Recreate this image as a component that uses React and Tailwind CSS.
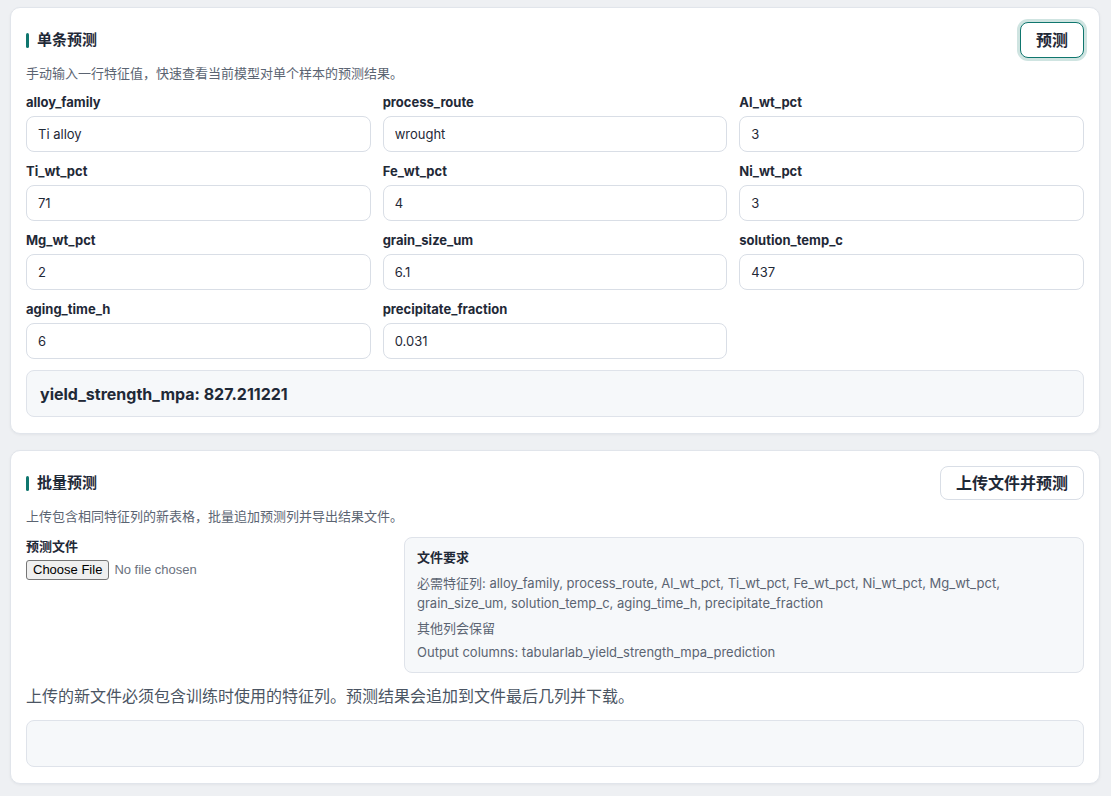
import React from 'react';

const FONT = "font-['Inter','Noto_Sans_CJK_SC',sans-serif]";

const FIELDS = [
  ['alloy_family', 'Ti alloy'],
  ['process_route', 'wrought'],
  ['Al_wt_pct', '3'],
  ['Ti_wt_pct', '71'],
  ['Fe_wt_pct', '4'],
  ['Ni_wt_pct', '3'],
  ['Mg_wt_pct', '2'],
  ['grain_size_um', '6.1'],
  ['solution_temp_c', '437'],
  ['aging_time_h', '6'],
  ['precipitate_fraction', '0.031'],
];

function SectionTitle({ children }) {
  return (
    <div className="flex items-center gap-2">
      <span className="inline-block w-[3px] h-[15px] rounded-sm bg-[#0f766e]" />
      <h2 className="text-[15px] font-bold text-[#1f2937] leading-5">{children}</h2>
    </div>
  );
}

function Field({ label, value }) {
  return (
    <label className="flex flex-col gap-[5px]">
      <span className="text-[13px] font-bold leading-[18px] text-[#1f2937]">{label}</span>
      <input
        defaultValue={value}
        className="h-9 w-full rounded-lg border border-[#d9dee6] bg-white px-[11px] text-[13px] text-[#1f2937] outline-none"
      />
    </label>
  );
}

export default function App() {
  return (
    <div className={`min-h-screen bg-[#eef0f3] pl-[10px] pr-[11px] pt-[7px] pb-4 ${FONT}`}>
      <div className="flex flex-col gap-4">
        {/* Single prediction */}
        <section className="rounded-[10px] border border-[#e1e5eb] bg-white px-[15px] pt-[14px] pb-4 shadow-[0_1px_3px_rgba(15,23,42,0.05)]">
          <div className="flex items-center justify-between">
            <SectionTitle>单条预测</SectionTitle>
            <button className="h-9 rounded-lg border border-[#0f766e] bg-white px-[15px] text-[16px] font-bold text-[#1f2937] ring-[3px] ring-[#cfe4e1]">
              预测
            </button>
          </div>
          <p className="mt-[5px] text-[13px] leading-5 text-[#5b6472]">
            手动输入一行特征值，快速查看当前模型对单个样本的预测结果。
          </p>
          <div className="mt-[10px] grid grid-cols-3 gap-x-3 gap-y-[10px]">
            {FIELDS.map(([label, value]) => (
              <Field key={label} label={label} value={value} />
            ))}
          </div>
          <div className="mt-[11px] flex h-[47px] items-center rounded-lg border border-[#dfe3ea] bg-[#f6f8fa] px-[13px]">
            <span className="text-[16px] font-bold text-[#1f2937]">yield_strength_mpa: 827.211221</span>
          </div>
        </section>

        {/* Batch prediction */}
        <section className="rounded-[10px] border border-[#e1e5eb] bg-white px-[15px] pt-[15px] pb-4 shadow-[0_1px_3px_rgba(15,23,42,0.05)]">
          <div className="flex items-center justify-between">
            <SectionTitle>批量预测</SectionTitle>
            <button className="h-[34px] rounded-lg border border-[#d9dee6] bg-white px-[15px] text-[16px] font-bold text-[#1f2937]">
              上传文件并预测
            </button>
          </div>
          <p className="mt-[6px] text-[13px] leading-5 text-[#5b6472]">
            上传包含相同特征列的新表格，批量追加预测列并导出结果文件。
          </p>
          <div className="mt-[11px] grid grid-cols-[366px_1fr] gap-3">
            <div className="flex flex-col items-start gap-[5px]">
              <span className="text-[13px] font-bold leading-[18px] text-[#1f2937]">预测文件</span>
              <input
                type="file"
                className="font-['Liberation_Sans',sans-serif] text-[13px] leading-5 text-[#6b7280] file:mr-[5px] file:rounded-[3px] file:border file:border-[#767676] file:bg-[#efefef] file:px-[6px] file:py-0 file:text-[13px] file:leading-[18px] file:text-black"
              />
            </div>
            <div className="rounded-lg border border-[#dfe3ea] bg-[#f6f8fa] px-3 pt-[9px] pb-[10px] text-[13px] leading-5 text-[#5b6472]">
              <h3 className="font-bold text-[#1f2937]">文件要求</h3>
              <p className="mt-[6px]">
                必需特征列: alloy_family, process_route, Al_wt_pct, Ti_wt_pct, Fe_wt_pct, Ni_wt_pct, Mg_wt_pct,
                grain_size_um, solution_temp_c, aging_time_h, precipitate_fraction
              </p>
              <p className="mt-[5px]">其他列会保留</p>
              <p className="mt-[4px]">Output columns: tabularlab_yield_strength_mpa_prediction</p>
            </div>
          </div>
          <p className="mt-[11px] text-[16px] leading-6 text-[#4b5563]">
            上传的新文件必须包含训练时使用的特征列。预测结果会追加到文件最后几列并下载。
          </p>
          <div className="mt-3 h-[47px] rounded-lg border border-[#dfe3ea] bg-[#f6f8fa]" />
        </section>
      </div>
    </div>
  );
}
